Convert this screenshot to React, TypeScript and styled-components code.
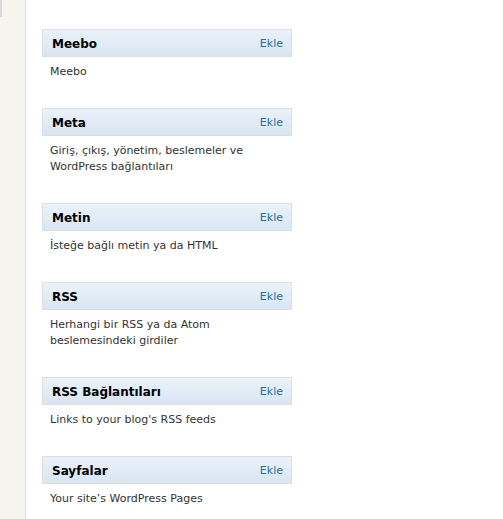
import styled, { createGlobalStyle } from "styled-components";

const widgets = [
  { title: "Meebo", desc: "Meebo" },
  { title: "Meta", desc: "Giriş, çıkış, yönetim, beslemeler ve WordPress bağlantıları" },
  { title: "Metin", desc: "İsteğe bağlı metin ya da HTML" },
  { title: "RSS", desc: "Herhangi bir RSS ya da Atom beslemesindeki girdiler" },
  { title: "RSS Bağlantıları", desc: "Links to your blog's RSS feeds" },
  { title: "Sayfalar", desc: "Your site’s WordPress Pages" },
];

function App() {
  return (
    <>
      <GlobalStyle />
      <Page>
        <Sidebar>
          <SidebarTab />
        </Sidebar>
        <Main>
          {widgets.map((w) => (
            <Widget key={w.title}>
              <WidgetHeader>
                <WidgetTitle>{w.title}</WidgetTitle>
                <AddLink href="#">Ekle</AddLink>
              </WidgetHeader>
              <WidgetDesc>{w.desc}</WidgetDesc>
            </Widget>
          ))}
        </Main>
      </Page>
    </>
  );
}

const GlobalStyle = createGlobalStyle`
  html, body {
    margin: 0;
    padding: 0;
    background: #fff;
  }
  body {
    font-family: "DejaVu Sans", Verdana, sans-serif;
    font-size: 11px;
    color: #333;
  }
`;

const Page = styled.div`
  display: flex;
  min-height: 519px;
`;

const Sidebar = styled.div`
  width: 25px;
  flex-shrink: 0;
  background: #f5f4ef;
  border-right: 1px solid #dcdcdc;
`;

const SidebarTab = styled.div`
  width: 2px;
  height: 17px;
  background: #d8d8d8;
`;

const Main = styled.div`
  padding: 29px 0 0 16px;
  display: flex;
  flex-direction: column;
  gap: 28px;
`;

const Widget = styled.div`
  width: 250px;
`;

const WidgetHeader = styled.div`
  display: flex;
  justify-content: space-between;
  align-items: center;
  height: 26px;
  padding: 0 8px 0 9px;
  border: 1px solid #dfdfdf;
  background: linear-gradient(to bottom, #eaf2fa, #d8e6f2);
`;

const WidgetTitle = styled.span`
  font-weight: bold;
  font-size: 12px;
  color: #000;
  padding-top: 1px;
`;

const AddLink = styled.a`
  color: #2a6f9b;
  text-decoration: none;
  font-size: 11px;
`;

const WidgetDesc = styled.p`
  margin: 7px 0 0;
  padding: 0 8px;
  line-height: 16px;
`;

export default App;
